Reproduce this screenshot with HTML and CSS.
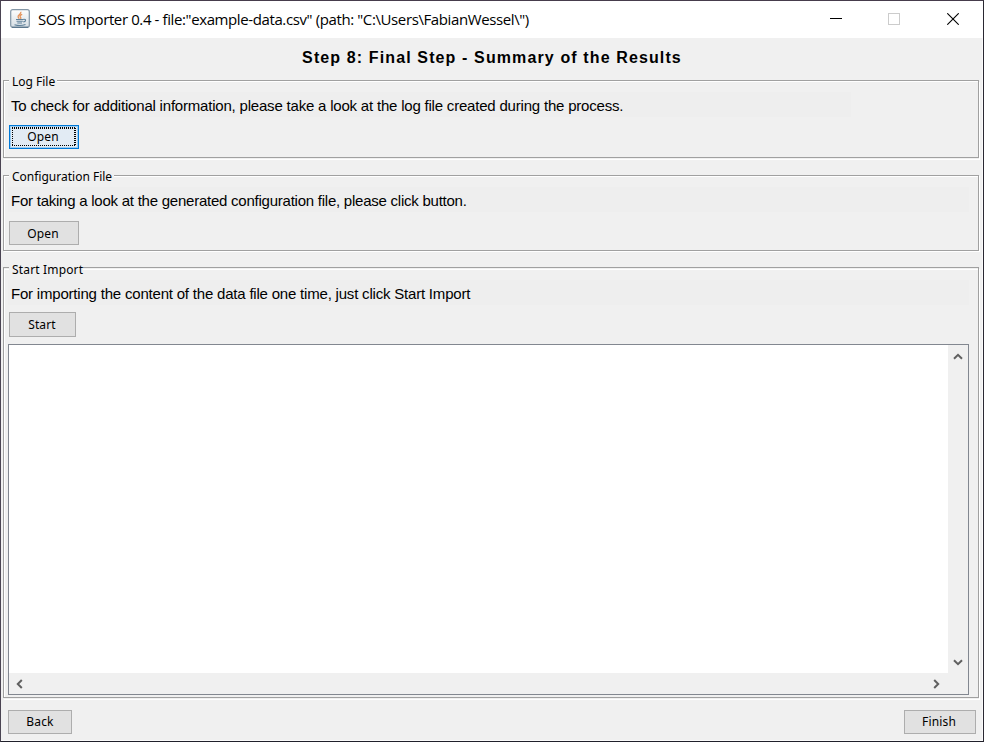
FILE: index.html
```html
<!DOCTYPE html>
<html lang="en">
<head>
<meta charset="utf-8">
<title>SOS Importer 0.4</title>
<link rel="stylesheet" href="styles.css">
</head>
<body>
<div class="window">
  <header class="titlebar">
    <svg class="app-icon" width="20" height="20" viewBox="0 0 20 20">
      <defs><linearGradient id="tile" x1="0" y1="0" x2="0" y2="1"><stop offset="0" stop-color="#fdfdfd"/><stop offset="1" stop-color="#d5dde3"/></linearGradient></defs>
      <rect x=".7" y=".7" width="18.6" height="17.6" rx="2" fill="url(#tile)" stroke="#8396a6" stroke-width="1.2"/>
      <path d="M2 18.3h16" stroke="#58748b" stroke-width="1.2"/>
      <path d="M10.8 2.8c1 2-3.2 3-2.7 5 .2.8.8 1.3 1.2 2M12.2 5.4c-2.6 1-2.5 2-1.6 3 .5.6.3 1.1-.2 1.5" fill="none" stroke="#e5935a" stroke-width="1.3"/>
      <path d="M6 10.5h7.5M6.5 12.3h6.3M7.3 14h4.7M4.5 15.7c3 .9 8 .9 11-.2M13.5 10.3c3-.4 2.6 2.3-.2 2.6" fill="none" stroke="#5f8099" stroke-width="1.1"/>
    </svg>
    <h1 class="window-title">SOS Importer 0.4 - file:"example-data.csv" (path: "C:\Users\FabianWessel\")</h1>
    <div class="controls">
      <svg width="12" height="12"><path d="M0 5.5h12" stroke="#000"/></svg>
      <svg width="12" height="12"><rect x=".5" y=".5" width="11" height="11" fill="none" stroke="#ccc"/></svg>
      <svg width="12" height="12"><path d="M.3.3l11.4 11.4M11.7.3L.3 11.7" stroke="#000" stroke-width="1.1"/></svg>
    </div>
  </header>
  <main class="content">
    <h2 class="step">Step 8: Final Step - Summary of the Results</h2>
    <section class="group log">
      <h3 class="legend">Log File</h3>
      <p class="message">To check for additional information, please take a look at the log file created during the process.</p>
      <button class="button focused">Open</button>
    </section>
    <section class="group config">
      <h3 class="legend">Configuration File</h3>
      <p class="message">For taking a look at the generated configuration file, please click button.</p>
      <button class="button">Open</button>
    </section>
    <section class="group import">
      <h3 class="legend">Start Import</h3>
      <p class="message">For importing the content of the data file one time, just click Start Import</p>
      <button class="button start">Start</button>
      <div class="output">
        <div class="view"></div>
        <div class="scroll-y">
          <svg width="10" height="7"><path d="M1 5.8L5 1.8l4 4" class="arrow"/></svg>
          <svg width="10" height="7"><path d="M1 1.2l4 4 4-4" class="arrow"/></svg>
        </div>
        <div class="scroll-x">
          <svg width="7" height="10"><path d="M5.8 1L1.8 5l4 4" class="arrow"/></svg>
          <svg width="7" height="10"><path d="M1.2 1l4 4-4 4" class="arrow"/></svg>
        </div>
      </div>
    </section>
    <footer class="footer">
      <button class="button back">Back</button>
      <button class="button finish">Finish</button>
    </footer>
  </main>
</div>
</body>
</html>
```
FILE: styles.css
```css
* { box-sizing: border-box; margin: 0; padding: 0; }
body { width: 984px; height: 742px; overflow: hidden; }
svg { display: block; }
.window {
  width: 984px; height: 742px;
  border: 1px solid; border-color: #463c4c #2a2832 #20202b #4a4452;
  background: #f0f0f0; color: #000;
  display: flex; flex-direction: column;
}
.titlebar { height: 37px; background: #fff; display: flex; align-items: flex-start; padding: 8px 24px 0 9px; }
.window-title { font: 400 15px/20px "Open Sans", sans-serif; letter-spacing: -.39px; margin-left: 8px; white-space: nowrap; }
.controls { margin-left: auto; padding-top: 4px; display: flex; gap: 46px; }
.controls svg:last-child { margin-left: 1px; }
.content { flex: 1; display: flex; flex-direction: column; box-shadow: inset -1px -1px #fafafa; }
.step { height: 42px; padding-top: 10px; text-align: center; font: 700 16px/20px "Liberation Sans", Arial, sans-serif; letter-spacing: 1.12px; white-space: nowrap; }
.group {
  width: 976px; margin-left: 2px; padding-left: 5px;
  border: 1px solid #a0a0a0; box-shadow: 1px 1px #fff, inset 1px 1px #fff;
  display: flex; flex-direction: column; align-items: flex-start; flex: none;
}
.log { height: 78px; box-shadow: 0 1px #f0f0f0, 1px 2px #fff, inset 1px 1px #fff; }
.config { height: 76px; margin-top: 17px; }
.import { height: 431px; margin-top: 16px; padding-left: 4px; box-shadow: 0 1px #f0f0f0, 1px 2px #fff, inset 0 1px #f0f0f0, inset 1px 2px #fff; }
.legend { height: 14px; margin-top: -7px; padding: 0 2px 0 3px; background: #f0f0f0; font: 400 12px/15px "Noto Sans", Tahoma, sans-serif; white-space: nowrap; }
.import .legend { margin-left: 1px; padding-right: 0; margin-top: -6px; letter-spacing: .16px; }
.message { width: 843px; height: 25px; margin: 4px 0 8px -1px; padding-left: 3px; background: #eee; font: 400 15px/27px "Liberation Sans", Arial, sans-serif; letter-spacing: -.2px; white-space: nowrap; }
.config .message, .import .message { width: 961px; }
.config .message { margin-bottom: 9px; letter-spacing: -.24px; }
.import .message { margin-left: 0; margin-bottom: 7px; }
.button { width: 70px; height: 24px; flex: none; border: 1px solid #adadad; background: #e1e1e1; font: 400 12px/20px "Noto Sans", Tahoma, sans-serif; letter-spacing: .15px; color: #000; padding-right: 2px; }
.config .button { padding-top: 1px; }
.focused {
  border-color: #0078d7;
  background:
    repeating-linear-gradient(90deg, #000 0 1px, transparent 1px 2px) 2px 1px / 64px 2px no-repeat,
    repeating-linear-gradient(90deg, #000 0 1px, transparent 1px 2px) 2px 19px / 64px 1px no-repeat,
    repeating-linear-gradient(#000 0 1px, transparent 1px 2px) 2px 2px / 1px 18px no-repeat,
    repeating-linear-gradient(#000 0 1px, transparent 1px 2px) 64px 2px / 2px 18px no-repeat,
    #e2ebf4;
  box-shadow: inset 0 0 0 1px #9ccdf2;
  outline: none;
}
.start { width: 67px; height: 25px; margin-left: 1px; padding-right: 1px; }
.output { width: 961px; height: 351px; margin-top: 7px; flex: none; border: 1px solid #828790; display: grid; grid-template: 328px 21px / 939px 20px; background: #f0f0f0; }
.view { background: #fff; }
.scroll-y { display: flex; flex-direction: column; justify-content: space-between; align-items: center; padding: 8px 0 7px; }
.scroll-x { display: flex; justify-content: space-between; align-items: center; padding: 0 8px 0 7px; }
.arrow { fill: none; stroke: #606060; stroke-width: 2; }
.footer { display: flex; justify-content: space-between; padding: 12px 7px 0; }
.back { width: 64px; padding-right: 0; }
.finish { width: 72px; }
```
